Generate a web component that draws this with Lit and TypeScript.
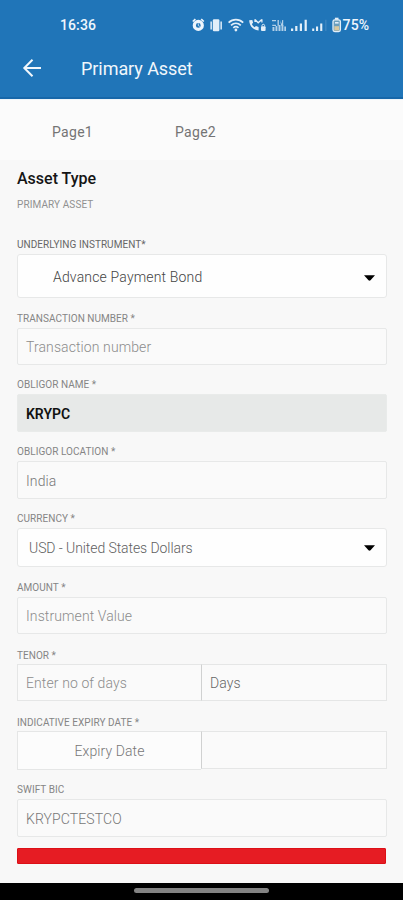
import { LitElement, html, css } from "lit";
import { customElement } from "lit/decorators.js";
import { classMap } from "lit/directives/class-map.js";

@customElement("status-bar")
class StatusBar extends LitElement {
  static styles = css`
    :host { display: flex; height: 49px; align-items: center; color: #eef6fd; }
    .time { margin-left: 60px; width: 132px; font-size: 14px; font-weight: 500; letter-spacing: 0.1px; }
    svg { display: block; width: 150px; height: 20px; flex: none; }
    .pct { margin-left: 0.5px; font-size: 14px; font-weight: 500; letter-spacing: 0.2px; }
  `;
  render() {
    return html`
      <span class="time">16:36</span>
      <svg viewBox="192 14 150 20" fill="#e3eff9">
        <g fill="none" stroke="#eef6fd">
          <circle cx="198.3" cy="24.4" r="4" stroke-width="3.2" />
          <path d="M192.8 20.5l2.6-2.4M203.8 20.5l-2.6-2.4" stroke-width="1.7" />
          <path d="M198.3 22.400v2.200l1.400 .8" stroke-width=".8" />
        </g>
        <rect x="212.8" y="18.2" width="6.6" height="12" rx="1.2" />
        <path d="M210.4 20.5v8h1.5v-8zM220.4 20.5v8h1.5v-8z" />
        <g fill="none" stroke="#e3eff9" stroke-width="1.7">
          <path d="M228.6 21.6c4.3-4.1 10.3-4.1 14.6 0M231 24.4c2.9-2.7 6.9-2.7 9.8 0M233.3 26.8c1.5-1.4 3.7-1.4 5.2 0" />
        </g>
        <circle cx="235.9" cy="29" r="1.4" />
        <path d="M249.2 19.2c.2 5.800 3.900 9.800 9.400 10.200v-3.300l-2.600-1-1.500 1.200c-1.200-.7-2.100-1.900-2.600-3.200l1.200-1.400-.8-2.700z" />
        <path d="M255 18.500l3.200 3.300 3.600-3.300M261.900 18.300v3.200M255 18.300v2.600" fill="none" stroke="#e3eff9" stroke-width="1.300" />
        <rect x="261" y="25.200" width="4.600" height="4.800" rx="1" />
        <path d="M262 25.500v-1c0-1.600 2.600-1.600 2.600 0v1" fill="none" stroke="#e3eff9" />
        <g opacity=".75">
          <path d="M272 19h4v1.300h-4zM274.500 20.300l-2 3.500h3.500v1.300h-4zM277.500 19h1.400v5.800h-1.400zM280 19l1.600 4 .6-4h1v5.800h-2z" />
          <path d="M272.500 26h1.900v4h-1.900zM275.500 25h1.900v5h-1.900zM278.500 24h2v6h-2zM281.500 24h1.900v6h-1.900zM284.300 25.500h1.700v4.500h-1.700z" />
        </g>
        <path d="M291 27.500h2.200v2.500h-2.200zM295.200 25h2.200v5h-2.200zM299.800 22.500h2.200v7.500h-2.200zM304.600 18.800h2.200v11.200h-2.200z" />
        <path d="M312.200 27.500h2v2.500h-2zM316 25.500h2.100v4.500h-2.100zM320.200 22.500h2.100v7.500h-2.100z" />
        <path d="M325 18.800h1.600v11.200h-1.600z" opacity=".12" />
        <rect x="333" y="18.800" width="7.400" height="11.800" rx="1.800" fill="#6c9fbd" stroke="#e3eff9" stroke-width="1.300" />
        <rect x="334.900" y="16.700" width="3.600" height="2" />
        <rect x="334.300" y="25.200" width="4.800" height="4.300" fill="#d9c9a0" />
        <path d="M335 21h3.600v1.600h-3.600z" />
      </svg>
      <span class="pct">75%</span>
    `;
  }
}

@customElement("form-field")
class FormField extends LitElement {
  static properties = {
    label: {},
    value: {},
    kind: {},
    strong: { type: Boolean },
  };
  declare label: string;
  declare value: string;
  declare kind: string;
  declare strong: boolean;

  static styles = css`
    :host { display: block; }
    .label {
      height: 18px; line-height: 18.5px; font-size: 10px; color: #858585;
      white-space: pre; letter-spacing: 0.05px;
    }
    .label.strong { color: #666; }
    .box {
      box-sizing: border-box; height: var(--box, 37px); display: flex; align-items: center;
      justify-content: space-between; border: 1px solid #e7e8e8; border-radius: 2px;
      background: #fafafa; padding: 1px 11px 0 8px; font-size: 14px; font-weight: 300;
      color: #777; letter-spacing: 0.1px; white-space: pre;
    }
    .placeholder { color: #8c8c8c; }
    .select { background: #fefefe; border-radius: 3px; color: #606060; padding-left: 11px; letter-spacing: -0.08px; }
    .indent { padding-left: 35px; color: #444; letter-spacing: 0.17px; }
    .indent .caret { margin-top: 2px; }
    .filled { background: #e7e9e8; border-color: #e9ebea; color: #111; font-weight: 600; letter-spacing: 0; }
    .caret { width: 11px; height: 6px; display: block; }
  `;
  render() {
    const k = this.kind ?? "";
    const select = k.includes("select");
    return html`
      <div class=${classMap({ label: true, strong: this.strong })}>${this.label}</div>
      <div class="box ${k}">
        <span>${this.value}</span>
        ${select
          ? html`<svg class="caret" viewBox="0 0 11 6"><path d="M0 .3h11L6.5 5.3q-1 .8-2 0z" fill="#000" /></svg>`
          : null}
      </div>
    `;
  }
}

@customElement("app-root")
class AppRoot extends LitElement {
  static styles = css`
    :host {
      display: flex; flex-direction: column; width: 403px; height: 900px; overflow: hidden;
      background: #f8f8f8; font-family: Roboto, "Liberation Sans", sans-serif;
    }
    header { box-sizing: border-box; height: 99px; flex: none; background: #2075b8; border-bottom: 2px solid #1767a9; }
    .bar { display: flex; align-items: center; height: 38px; color: #f1f7fc; }
    .back { width: 20px; height: 20px; margin-left: 22px; margin-right: 39px; }
    .title { font-size: 18px; letter-spacing: -0.06px; }
    nav {
      height: 61px; flex: none; display: flex; align-items: center; background: #fbfbfb;
      font-size: 14px; color: #747474; padding-left: 52px; letter-spacing: 0.3px;
      border-top: 1px solid #eef5fa; box-sizing: border-box;
    }
    .tab { width: 123px; padding-top: 4px; }
    main { flex: 1; padding: 0 16px 0 17px; display: flex; flex-direction: column; }
    h1 { margin: 8px 0 0; height: 22px; line-height: 22px; font-size: 16px; font-weight: 500; letter-spacing: 0; color: #151515; }
    .sub { height: 18px; line-height: 19px; margin-top: 5px; margin-bottom: 23px; font-size: 10px; letter-spacing: 0.1px; color: #909090; }
    .g11 { margin-top: 11px; }
    .g12 { margin-top: 12px; }
    .h38 { --box: 38px; }
    .h39 { --box: 39px; }
    .h44 { --box: 44px; }
    .label { height: 18px; line-height: 19px; font-size: 10px; letter-spacing: 0.05px; color: #858585; }
    .pair { display: grid; grid-template-columns: 184px 1fr; align-items: start; }
    .cell {
      box-sizing: border-box; height: 37px; display: flex; align-items: center;
      border: 1px solid #e5e6e6; background: #fafafa; padding: 1px 0 0 8px;
      font-size: 14px; font-weight: 300; letter-spacing: 0.1px; color: #8c8c8c;
    }
    .cell + .cell { border-left-color: #d0d1d1; color: #666; }
    .pair > .cell:first-child { border-right: 0; }
    .date { height: 39px; }
    .date.centered { justify-content: center; padding: 1px 0 0; background: #fcfcfc; color: #777; }
    .date + .cell { height: 38px; }
    .submit { box-sizing: border-box; width: 369px; height: 16px; margin-top: 11px; border: 1px solid #dc1017; background: #e61c23; border-radius: 1px; }
    footer { height: 17px; flex: none; background: #000; display: flex; justify-content: center; }
    .pill { width: 135px; height: 5px; border-radius: 3px; background: #838383; margin-top: 5px; }
  `;
  render() {
    return html`
      <header>
        <status-bar></status-bar>
        <div class="bar">
          <svg class="back" viewBox="0 0 20 20" fill="none" stroke="#f1f7fc" stroke-width="2">
            <path d="M19 10H2.5M10.5 1.8L2.3 10l8.2 8.2" />
          </svg>
          <span class="title">Primary Asset</span>
        </div>
      </header>
      <nav><span class="tab">Page1</span><span class="tab">Page2</span></nav>
      <main>
        <h1>Asset Type</h1>
        <div class="sub">PRIMARY ASSET</div>
        <form-field class="h44" strong label="UNDERLYING INSTRUMENT*" kind="select indent" value="Advance Payment Bond"></form-field>
        <form-field class="g12" label="TRANSACTION NUMBER *" kind="placeholder" value="Transaction number"></form-field>
        <form-field class="g11 h38" label="OBLIGOR NAME *" kind="filled" value="KRYPC"></form-field>
        <form-field class="g11 h38" label="OBLIGOR LOCATION *" value="India"></form-field>
        <form-field class="g11 h39" label="CURRENCY *" kind="select" value="USD - United States Dollars"></form-field>
        <form-field class="g12" label="AMOUNT *" kind="placeholder" value="Instrument Value"></form-field>
        <div class="label g12">TENOR *</div>
        <div class="pair"><div class="cell">Enter no of days</div><div class="cell">Days</div></div>
        <div class="label g12">INDICATIVE EXPIRY DATE *</div>
        <div class="pair"><div class="cell date centered">Expiry Date</div><div class="cell"></div></div>
        <form-field class="g11 h38" label="SWIFT BIC" value="KRYPCTESTCO"></form-field>
        <div class="submit"></div>
      </main>
      <footer><div class="pill"></div></footer>
    `;
  }
}
